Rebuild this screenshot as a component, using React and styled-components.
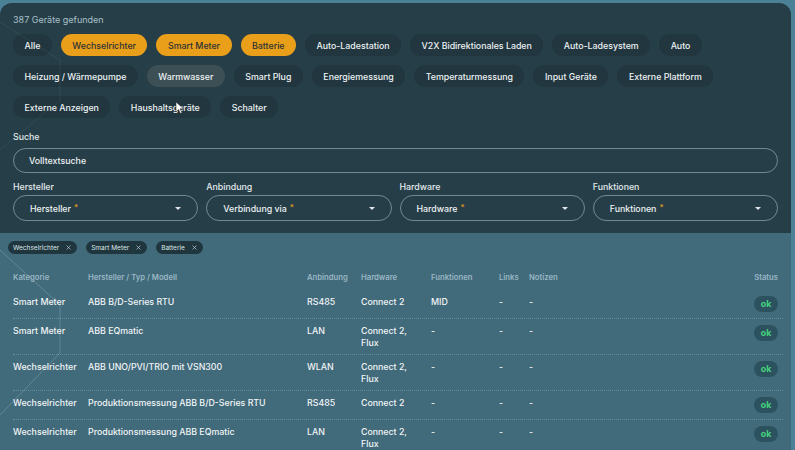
import React from "react";
import styled, { createGlobalStyle } from "styled-components";
import { X } from "lucide-react";

const GlobalStyle = createGlobalStyle`
  html, body {
    margin: 0;
    padding: 0;
    background: #4a7f94;
  }
  * { box-sizing: border-box; }
  body {
    font-family: 'Inter', 'Noto Sans', sans-serif;
    color: #eef3f4;
  }
`;

const Page = styled.div`
  position: relative;
  width: 795px;
  height: 450px;
  overflow: hidden;
  padding: 3px 4px 0 0;
  background: #4b8196;
`;

const Content = styled.div`
  height: 100%;
  background: #416a7b;
  border-radius: 12px 12px 0 0;
  display: flex;
  flex-direction: column;
`;

const FilterPanel = styled.section`
  background: #263e48;
  border-radius: 12px 12px 0 0;
  padding: 11px 13px 12px 13px;
  display: flex;
  flex-direction: column;
`;

const Count = styled.div`
  font-size: 9px;
  line-height: 12px;
  color: #a9c0c8;
  margin-bottom: 8px;
`;

const ChipRows = styled.div`
  display: flex;
  flex-direction: column;
  gap: 9px;
`;

const ChipRow = styled.div`
  display: flex;
  gap: 9px;
`;

const Chip = styled.button`
  height: 22px;
  padding: 0 11.5px;
  border: none;
  border-radius: 11px;
  font-family: inherit;
  font-size: 8.8px;
  font-weight: 500;
  white-space: nowrap;
  cursor: pointer;
  background: ${(p) =>
    p.$active ? "#ea9f1a" : p.$hover ? "#3c4f55" : "#21363f"};
  color: ${(p) => (p.$active ? "#2c3236" : "#eef2f3")};
`;

const Label = styled.div`
  font-size: 8.8px;
  line-height: 12px;
  font-weight: 500;
  color: #e3eaec;
  margin-top: ${(p) => p.$top || 0}px;
  margin-bottom: ${(p) => p.$gap ?? 5}px;
`;

const SearchField = styled.div`
  height: 25px;
  border: 1px solid rgba(190, 214, 220, 0.5);
  border-radius: 13px;
  padding: 0 15px;
  display: flex;
  align-items: center;
  font-size: 8.8px;
  font-weight: 500;
  color: #eef2f3;
  margin-bottom: 8px;
`;

const SelectGrid = styled.div`
  display: grid;
  grid-template-columns: repeat(4, 1fr);
  column-gap: 8px;
`;

const SelectBox = styled.div`
  height: 26px;
  border: 1px solid rgba(190, 214, 220, 0.5);
  border-radius: 13px;
  padding: 0 16px;
  display: flex;
  align-items: center;
  justify-content: space-between;
  font-size: 8.8px;
  font-weight: 500;
  color: #eef2f3;
`;

const Star = styled.span`
  color: #ea9f1a;
  font-size: 8px;
  margin-left: 3px;
  vertical-align: 2px;
`;

const Caret = styled.span`
  width: 0;
  height: 0;
  border-left: 3px solid transparent;
  border-right: 3px solid transparent;
  border-top: 3px solid #dfe7ea;
`;

const TagRow = styled.div`
  display: flex;
  gap: 9px;
  padding: 8px 8px 0;
`;

const Tag = styled.span`
  height: 13px;
  padding: 0 5px;
  border-radius: 7px;
  background: #20363e;
  display: inline-flex;
  align-items: center;
  gap: 6px;
  font-size: 6.5px;
  color: #dde6e9;
`;

const Table = styled.div`
  padding: 18px 8px 0 13px;
`;

const Columns = styled.div`
  display: grid;
  grid-template-columns: 75px 219px 54px 70px 68px 30px 1fr 35px;
`;

const HeadRow = styled(Columns)`
  font-size: 7.7px;
  line-height: 12px;
  font-weight: 600;
  color: #9ab8c4;
  padding-bottom: 6px;
`;

const Row = styled(Columns)`
  border-bottom: 1px dotted rgba(130, 180, 198, 0.5);
  font-size: 8.8px;
  line-height: 11.5px;
  font-weight: 500;
  color: #f1f5f6;
`;

const Cell = styled.div`
  padding: 6px 0;
`;

const StatusCell = styled.div`
  padding: 6px 5px 6px 0;
  display: flex;
  justify-content: flex-end;
  align-items: flex-start;
`;

const StatusPill = styled.span`
  display: block;
  width: 24px;
  height: 16px;
  border-radius: 8px;
  background: #2c5260;
  color: #45d47c;
  font-size: 8.8px;
  font-weight: 700;
  line-height: 16px;
  text-align: center;
`;

const Decor = styled.svg`
  position: absolute;
  left: 0;
  top: 0;
  pointer-events: none;
`;

const chipRows = [
  [
    { t: "Alle" },
    { t: "Wechselrichter", a: true },
    { t: "Smart Meter", a: true },
    { t: "Batterie", a: true },
    { t: "Auto-Ladestation" },
    { t: "V2X Bidirektionales Laden" },
    { t: "Auto-Ladesystem" },
    { t: "Auto" },
  ],
  [
    { t: "Heizung / Wärmepumpe" },
    { t: "Warmwasser", h: true },
    { t: "Smart Plug" },
    { t: "Energiemessung" },
    { t: "Temperaturmessung" },
    { t: "Input Geräte" },
    { t: "Externe Plattform" },
  ],
  [{ t: "Externe Anzeigen" }, { t: "Haushaltsgeräte" }, { t: "Schalter" }],
];

const selects = [
  ["Hersteller", "Hersteller"],
  ["Anbindung", "Verbindung via"],
  ["Hardware", "Hardware"],
  ["Funktionen", "Funktionen"],
];

const rows = [
  ["Smart Meter", "ABB B/D-Series RTU", "RS485", ["Connect 2"], "MID"],
  ["Smart Meter", "ABB EQmatic", "LAN", ["Connect 2,", "Flux"], "-"],
  ["Wechselrichter", "ABB UNO/PVI/TRIO mit VSN300", "WLAN", ["Connect 2,", "Flux"], "-"],
  ["Wechselrichter", "Produktionsmessung ABB B/D-Series RTU", "RS485", ["Connect 2"], "-"],
  ["Wechselrichter", "Produktionsmessung ABB EQmatic", "LAN", ["Connect 2,", "Flux"], "-"],
];

export default function App() {
  return (
    <>
      <GlobalStyle />
      <Page>
        <Content>
          <FilterPanel>
            <Count>387 Geräte gefunden</Count>
            <ChipRows>
              {chipRows.map((r, i) => (
                <ChipRow key={i}>
                  {r.map((c) => (
                    <Chip key={c.t} $active={c.a} $hover={c.h}>
                      {c.t}
                    </Chip>
                  ))}
                </ChipRow>
              ))}
            </ChipRows>
            <Label $top={13}>Suche</Label>
            <SearchField>Volltextsuche</SearchField>
            <SelectGrid>
              {selects.map(([label, ph]) => (
                <div key={label}>
                  <Label $gap={2}>{label}</Label>
                  <SelectBox>
                    <span>
                      {ph}
                      <Star>*</Star>
                    </span>
                    <Caret />
                  </SelectBox>
                </div>
              ))}
            </SelectGrid>
          </FilterPanel>

          <TagRow>
            {["Wechselrichter", "Smart Meter", "Batterie"].map((t) => (
              <Tag key={t}>
                {t}
                <X size={7} strokeWidth={2} />
              </Tag>
            ))}
          </TagRow>

          <Table>
            <HeadRow>
              <div>Kategorie</div>
              <div>Hersteller / Typ / Modell</div>
              <div>Anbindung</div>
              <div>Hardware</div>
              <div>Funktionen</div>
              <div>Links</div>
              <div>Notizen</div>
              <div style={{ textAlign: "right", paddingRight: 5 }}>Status</div>
            </HeadRow>
            {rows.map((r, i) => (
              <Row key={i}>
                <Cell>{r[0]}</Cell>
                <Cell>{r[1]}</Cell>
                <Cell>{r[2]}</Cell>
                <Cell>
                  {r[3].map((l) => (
                    <div key={l}>{l}</div>
                  ))}
                </Cell>
                <Cell>{r[4]}</Cell>
                <Cell>-</Cell>
                <Cell>-</Cell>
                <StatusCell>
                  <StatusPill>ok</StatusPill>
                </StatusCell>
              </Row>
            ))}
          </Table>
        </Content>

        <Decor width="795" height="450" viewBox="0 0 795 450">
          <polyline
            points="0,22 60,60 60,100 0,150"
            fill="none"
            stroke="rgba(160,200,210,0.1)"
            strokeWidth="1"
          />
          <polyline
            points="0,250 60,305 60,353 0,415"
            fill="none"
            stroke="rgba(220,240,245,0.22)"
            strokeWidth="1"
          />
          <path
            d="M176 102 L176 112 L178.5 109.5 L180.5 113.5 L182 112.8 L180 108.8 L183.5 108.8 Z"
            fill="#ffffff"
            stroke="#333"
            strokeWidth="0.6"
          />
        </Decor>
      </Page>
    </>
  );
}
